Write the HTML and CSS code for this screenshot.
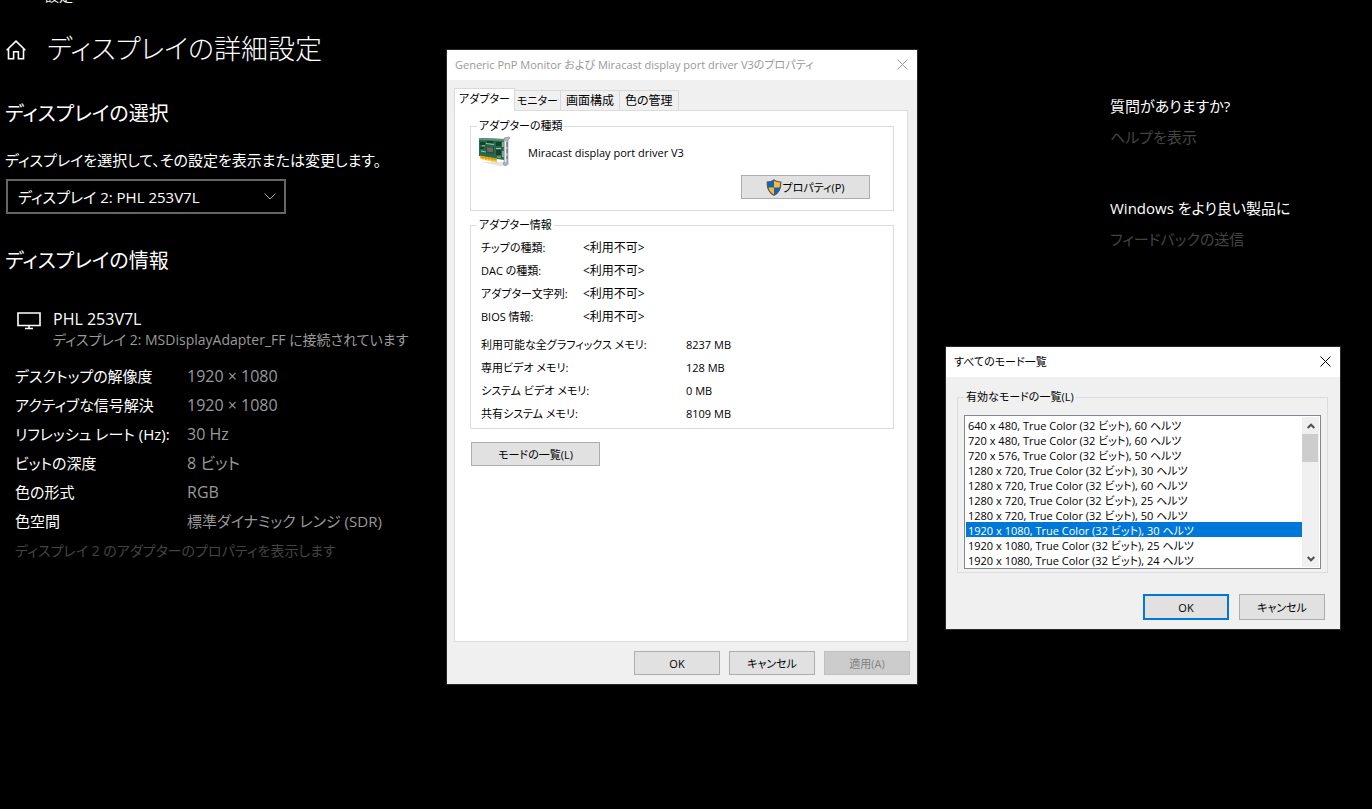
FILE: index.html
```
<!DOCTYPE html>
<html lang="ja">
<head>
<meta charset="utf-8">
<title>ディスプレイの詳細設定</title>
<link rel="stylesheet" href="styles.css">
</head>
<body>
<div class="settings">
  <header class="app-bar"><span>設定</span></header>
  <div class="columns">
    <main class="content">
      <div class="page-head">
        <svg class="home" viewBox="0 0 20 20" width="20" height="20" aria-hidden="true"><path d="M0.6 10.300 10 1.200l9.400 9.100M2.500 8.800V18.800H7.600V11.800H12.400V18.800H17.500V8.800" fill="none" stroke="#fff" stroke-width="1.600"/></svg>
        <h1>ディスプレイの詳細設定</h1>
      </div>
      <h2>ディスプレイの選択</h2>
      <label class="hint" for="display">ディスプレイを選択して、その設定を表示または変更します。</label>
      <div class="combo">
        <select id="display"><option>ディスプレイ 2: PHL 253V7L</option></select>
        <svg class="chevron" viewBox="0 0 12 7" width="12" height="7" aria-hidden="true"><path d="M.5.5 6 6 11.500.5" fill="none" stroke="#aaa"/></svg>
      </div>
      <h2>ディスプレイの情報</h2>
      <div class="device">
        <svg viewBox="0 0 24 18" width="24" height="18" aria-hidden="true"><path d="M1 1h22v12.500H1zM12 14v3M8 16.500h8" fill="none" stroke="#fff" stroke-width="1.600"/></svg>
        <div>
          <div class="device-name">PHL 253V7L</div>
          <div class="device-link">ディスプレイ 2: MSDisplayAdapter_FF に接続されています</div>
        </div>
      </div>
      <dl class="facts">
        <dt>デスクトップの解像度</dt><dd>1920 × 1080</dd>
        <dt>アクティブな信号解決</dt><dd>1920 × 1080</dd>
        <dt>リフレッシュ レート (Hz):</dt><dd>30 Hz</dd>
        <dt>ビットの深度</dt><dd>8 ビット</dd>
        <dt>色の形式</dt><dd>RGB</dd>
        <dt>色空間</dt><dd class="long">標準ダイナミック レンジ (SDR)</dd>
      </dl>
      <a class="link adapter-link" href="#">ディスプレイ 2 のアダプターのプロパティを表示します</a>
    </main>
    <aside class="help">
      <h3>質問がありますか?</h3>
      <a class="link" href="#">ヘルプを表示</a>
      <h3>Windows をより良い製品に</h3>
      <a class="link" href="#">フィードバックの送信</a>
    </aside>
  </div>
</div>

<section class="window adapter" role="dialog" aria-labelledby="adapter-title">
  <header class="caption inactive">
    <span id="adapter-title">Generic PnP Monitor および Miracast display port driver V3のプロパティ</span>
    <button class="close" aria-label="閉じる"><svg viewBox="0 0 11 11" width="11" height="11"><path d="M.5.5l10 10M10.500.5l-10 10" stroke="currentColor"/></svg></button>
  </header>
  <div class="adapter-body">
    <div class="tabs" role="tablist">
      <button class="tab active" role="tab" aria-selected="true">アダプター</button>
      <button class="tab kana" role="tab">モニター</button>
      <button class="tab" role="tab">画面構成</button>
      <button class="tab" role="tab">色の管理</button>
    </div>
    <div class="sheet" role="tabpanel">
      <fieldset class="group kind">
        <legend>アダプターの種類</legend>
        <div class="card-row">
          <svg viewBox="0 0 32 32" width="32" height="32" aria-hidden="true">
            <path d="M3 26h22l6 1-3 3h-8z" fill="#e4e4e4"/>
            <path d="M0 2 25 3v21L0 20z" fill="#26694b"/>
            <path d="M0 2 25 3v2L0 4z" fill="#58957a"/>
            <path d="M1 19.500l17 3v4L1 22.500z" fill="#e5a914"/>
            <path d="M1 21.500l17 3v2L1 23z" fill="#ffd24a"/>
            <path d="M4 20v3M7 21v3M10 21v3M13 22v3M16 22v3" stroke="#a87a10" stroke-width=".6"/>
            <path d="M7 10l8 1v7l-8-1z" fill="#39453f"/>
            <path d="M8 11l6 .8v4.500l-6-.8z" fill="#606c68"/>
            <path d="M1 6h5v3H1zM1 11h4v2H1zM17 6h5v4h-5zM17 14h5v5h-5zM8 5h6v2H8z" fill="#173f30"/>
            <path d="M7 7.500l8 1M2 15l5 1M17 12.500h5M18 21h4M3 9.800h3" stroke="#8fc9a5" stroke-width="1"/>
            <path d="M23 6h2v5h-2zM23 15h2v6h-2z" fill="#86a99b"/>
            <path d="M25 2l5-1 1 1-2 2v24l-3 2-2-2 1-2z" fill="#aeb2bd" stroke="#858a96" stroke-width=".6"/>
            <path d="M26.500 5v21" stroke="#eceef2" stroke-width="1.500"/>
            <path d="M28 6v5M28 13v4M28 20v3" stroke="#656b77" stroke-width="1"/>
          </svg>
          <span>Miracast display port driver V3</span>
        </div>
        <button class="btn props">
          <svg viewBox="0 0 16 17" width="16" height="17" aria-hidden="true">
            <path d="M8 1C6 2.600 3.500 3 1.200 3 1 9 2.500 13.500 8 16.200z" fill="#0b64c0"/>
            <path d="M8 1c2 1.600 4.500 2 6.800 2C15 9 13.500 13.500 8 16.200z" fill="#fdb92e"/>
            <path d="M8 8.500H1.500C2.200 12 4 14.500 8 16.200z" fill="#fdb92e"/>
            <path d="M8 8.500h6.500C13.800 12 12 14.500 8 16.200z" fill="#0b64c0"/>
            <path d="M8 1C6 2.600 3.500 3 1.200 3 1 9 2.500 13.500 8 16.200 13.500 13.500 15 9 14.800 3 12.500 3 10 2.600 8 1z" fill="none" stroke="#4b5661" stroke-width="1.200"/>
          </svg>プロパティ(P)</button>
      </fieldset>
      <fieldset class="group info">
        <legend>アダプター情報</legend>
        <dl class="chip">
          <dt>チップの種類:</dt><dd>&lt;利用不可&gt;</dd>
          <dt>DAC の種類:</dt><dd>&lt;利用不可&gt;</dd>
          <dt>アダプター文字列:</dt><dd>&lt;利用不可&gt;</dd>
          <dt>BIOS 情報:</dt><dd>&lt;利用不可&gt;</dd>
        </dl>
        <dl class="memory">
          <dt>利用可能な全グラフィックス メモリ:</dt><dd>8237 MB</dd>
          <dt>専用ビデオ メモリ:</dt><dd>128 MB</dd>
          <dt>システム ビデオ メモリ:</dt><dd>0 MB</dd>
          <dt>共有システム メモリ:</dt><dd>8109 MB</dd>
        </dl>
      </fieldset>
      <button class="btn modes-btn">モードの一覧(L)</button>
    </div>
    <footer class="actions">
      <button class="btn">OK</button>
      <button class="btn">キャンセル</button>
      <button class="btn" disabled>適用(A)</button>
    </footer>
  </div>
</section>

<section class="window modes" role="dialog" aria-labelledby="modes-title">
  <header class="caption">
    <span id="modes-title">すべてのモード一覧</span>
    <button class="close" aria-label="閉じる"><svg viewBox="0 0 11 11" width="11" height="11"><path d="M.5.5l10 10M10.500.5l-10 10" stroke="currentColor"/></svg></button>
  </header>
  <div class="modes-body">
    <fieldset class="group list-group">
      <legend><label for="modes">有効なモードの一覧(L)</label></legend>
      <div class="listbox">
        <select id="modes" size="10">
          <option>640 x 480, True Color (32 ビット), 60 ヘルツ</option>
          <option>720 x 480, True Color (32 ビット), 60 ヘルツ</option>
          <option>720 x 576, True Color (32 ビット), 50 ヘルツ</option>
          <option>1280 x 720, True Color (32 ビット), 30 ヘルツ</option>
          <option>1280 x 720, True Color (32 ビット), 60 ヘルツ</option>
          <option>1280 x 720, True Color (32 ビット), 25 ヘルツ</option>
          <option>1280 x 720, True Color (32 ビット), 50 ヘルツ</option>
          <option selected>1920 x 1080, True Color (32 ビット), 30 ヘルツ</option>
          <option>1920 x 1080, True Color (32 ビット), 25 ヘルツ</option>
          <option>1920 x 1080, True Color (32 ビット), 24 ヘルツ</option>
        </select>
        <div class="scrollbar">
          <button aria-label="上へ"><svg viewBox="0 0 8 6" width="8" height="6"><path d="M.7 5 4 1.700 7.300 5" fill="none" stroke="#505050" stroke-width="2"/></svg></button>
          <div class="thumb"></div>
          <button aria-label="下へ"><svg viewBox="0 0 8 6" width="8" height="6"><path d="M.7 1 4 4.300 7.300 1" fill="none" stroke="#505050" stroke-width="2"/></svg></button>
        </div>
      </div>
    </fieldset>
    <footer class="actions">
      <button class="btn default">OK</button>
      <button class="btn">キャンセル</button>
    </footer>
  </div>
</section>
</body>
</html>
```
FILE: styles.css
```
* { box-sizing: border-box; }

body {
  margin: 0;
  min-height: 100vh;
  background: #000;
  color: #fff;
  font: 15px/22px "Open Sans", "Noto Sans CJK JP", sans-serif;
  font-feature-settings: "palt";
  overflow: hidden;
}

button, select { font: inherit; font-feature-settings: inherit; color: inherit; }
h1, h2, h3, dl, dd { margin: 0; font-weight: 400; }

.app-bar {
  display: flex;
  align-items: flex-end;
  height: 4px;
  padding-left: 45px;
  font-size: 14px;
  line-height: 16px;
}

.columns { display: flex; }
.content { flex: 1; padding: 25px 0 0 5px; }

.page-head { display: flex; align-items: center; gap: 21px; padding-left: 1px; }
.page-head h1 { font-size: 27px; line-height: 40px; font-weight: 300; }
.page-head svg { margin-top: 2px; }
.content h2 { margin-top: 30px; font-size: 20px; line-height: 30px; }
.hint { display: block; margin-top: 20px; line-height: 22px; }

.combo { display: grid; align-items: center; width: 280px; margin: 8px 0 32px 1px; }
.combo select {
  grid-area: 1 / 1;
  height: 35px;
  padding: 0 10px;
  border: 2px solid #666;
  border-radius: 0;
  background: #000;
  appearance: none;
}
.chevron { grid-area: 1 / 1; justify-self: end; margin-right: 10px; pointer-events: none; }

.device { display: flex; gap: 12px; margin: 32px 0 12px 12px; }
.device svg { margin-top: 4px; }
.device-name { font-size: 16px; line-height: 22px; }
.device-link { font-size: 14px; line-height: 20px; color: #999; }

.facts {
  display: grid;
  grid-template-columns: 172px 1fr;
  padding-left: 10px;
  line-height: 29px;
}
.facts dd { font-size: 16px; color: #999; }
.facts dd.long { font-size: 15px; }

.link { color: #444; text-decoration: none; }
.adapter-link { display: block; padding-left: 10px; font-size: 14px; line-height: 29px; }

.help { width: 262px; padding-top: 91px; }
.help h3 { font-size: 15px; line-height: 22px; }
.help .link { display: block; margin: 9px 0 49px; line-height: 22px; }

.window {
  position: absolute;
  border: 1px solid #28282c;
  background: #f0f0f0;
  color: #000;
  font-size: 11px;
  line-height: 15px;
}
.adapter { left: 446px; top: 49px; width: 472px; }
.modes { left: 945px; top: 346px; width: 396px; }

.caption {
  display: flex;
  align-items: center;
  justify-content: space-between;
  height: 30px;
  padding: 0 9px 2px 8px;
  background: #fff;
}
.caption.inactive { color: #999; }
.close { display: flex; padding: 0; border: 0; background: none; }

.adapter-body { padding: 8px 9px 9px 7px; }
.tabs { display: flex; align-items: flex-end; }
.tab {
  height: 20px;
  padding: 0 5px;
  border: 1px solid #d9d9d9;
  border-width: 1px 1px 0 0;
  background: #f0f0f0;
  font-size: 12px;
  white-space: nowrap;
}
.tab.kana { padding: 0 2px; font-size: 11px; }
.tab.active {
  height: 23px;
  margin-bottom: -1px;
  padding: 0 4px 3px;
  border-left-width: 1px;
  background: #fff;
  font-size: 11px;
  z-index: 1;
}
.sheet {
  min-height: 532px;
  padding: 7px 13px 0 15px;
  border: 1px solid #dcdcdc;
  background: #fff;
}

.group { min-width: 0; margin: 0; border: 1px solid #dcdcdc; }
.group legend { padding: 0 2px; line-height: 16px; }

.kind { padding: 0 23px 11px 8px; }
.kind legend { margin-left: -2px; }
.card-row { display: flex; align-items: center; gap: 17px; height: 36px; }
.props { display: flex; align-items: center; justify-content: center; margin: 5px 0 0 auto; }

.info { margin-top: 6px; padding: 3px 8px 3px 10px; }
.info legend { margin-left: -4px; }
.info dl { display: grid; line-height: 23px; }
.chip { grid-template-columns: 102px 1fr; }
.chip dd { font-size: 12px; }
.memory { grid-template-columns: 205px 1fr; margin-top: 5px; }

.btn {
  height: 24px;
  width: 86px;
  padding: 0;
  border: 1px solid #adadad;
  background: #e1e1e1;
}
.btn:disabled { background: #ccc; border-color: #bfbfbf; color: #838383; }
.props, .modes-btn { width: 129px; }
.modes-btn { margin: 13px 0 0 1px; }
.btn.default { border: 2px solid #0078d7; }

.actions { display: flex; justify-content: flex-end; gap: 9px; }
.adapter .actions { margin: 9px -2px 0 0; }
.modes .actions { gap: 10px; margin: 21px 3px 0 0; }
.modes .btn { height: 26px; }

.modes-body { padding: 12px 12px 9px 11px; }
.list-group { padding: 10px 6px 3px; }
.list-group legend { margin-left: 0; }
.listbox { display: flex; padding: 1px; border: 1px solid #828790; background: #fff; }
.listbox select {
  flex: 1;
  height: 150px;
  padding: 0;
  border: 0;
  outline: 0;
  background: #fff;
  overflow: hidden;
}
.listbox option { min-height: 15px; height: 15px; padding: 0 2px; line-height: 15px; }
.listbox option:checked {
  background: #0078d7 linear-gradient(#0078d7, #0078d7);
  color: #fff;
  -webkit-text-fill-color: #fff;
}
.scrollbar { display: flex; flex-direction: column; width: 17px; background: #f0f0f0; }
.scrollbar button {
  display: flex;
  align-items: center;
  justify-content: center;
  height: 17px;
  padding: 0;
  border: 0;
  background: none;
}
.scrollbar button:last-child { margin-top: auto; }
.thumb { height: 28px; margin-right: 1px; background: #cdcdcd; }
```
